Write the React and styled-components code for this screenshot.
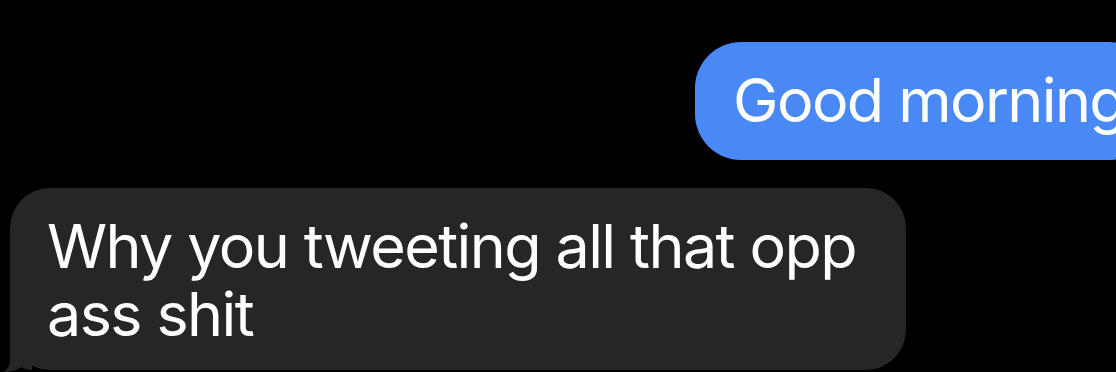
import React from "react";
import styled, { createGlobalStyle } from "styled-components";

const Global = createGlobalStyle`
  html, body { margin: 0; padding: 0; background: #000; overflow: hidden; }
  body { width: 1116px; height: 372px; }
`;

const Thread = styled.div`
  display: flex;
  flex-direction: column;
  gap: 28px;
  padding-top: 42px;
  width: 1116px;
  height: 372px;
  box-sizing: border-box;
  overflow: hidden;
  font-family: Inter, "Noto Sans", sans-serif;
  -webkit-font-smoothing: antialiased;
`;

const Row = styled.div`
  display: flex;
  padding-left: ${(p) => p.$indent}px;
`;

const Bubble = styled.div`
  position: relative;
  flex-shrink: 0;
  box-sizing: border-box;
  width: ${(p) => p.$width}px;
  min-height: ${(p) => p.$minHeight || 0}px;
  padding: ${(p) => p.$pad};
  border-radius: ${(p) => p.$radius}px;
  background: ${(p) => p.$bg};
  color: #fff;
  font-size: 61px;
  line-height: 68px;
  letter-spacing: -1.6px;
  white-space: nowrap;
`;

const Line = styled.div`
  display: block;
`;

const Tail = styled.svg`
  position: absolute;
  left: -8px;
  bottom: -2px;
  width: 40px;
  height: 40px;
`;

export default function App() {
  return (
    <>
      <Global />
      <Thread>
        <Row $indent={695}>
          <Bubble $bg="#4889F5" $width={460} $minHeight={118} $radius={46} $pad="24px 0 26px 38px">
            Good morning
          </Bubble>
        </Row>
        <Row $indent={10}>
          <Bubble $bg="#262628" $width={896} $minHeight={182} $radius={40} $pad="24px 30px 22px 37px">
            <Line>Why you tweeting all that opp</Line>
            <Line>ass shit</Line>
            <Tail viewBox="0 0 40 40">
              <path
                d="M8 0 L8 28 C8 34 5 38 1 40 C9 40 15 38 19 35 C22 37 26 38 30 38 L30 0 Z"
                fill="#262628"
              />
            </Tail>
          </Bubble>
        </Row>
      </Thread>
    </>
  );
}
